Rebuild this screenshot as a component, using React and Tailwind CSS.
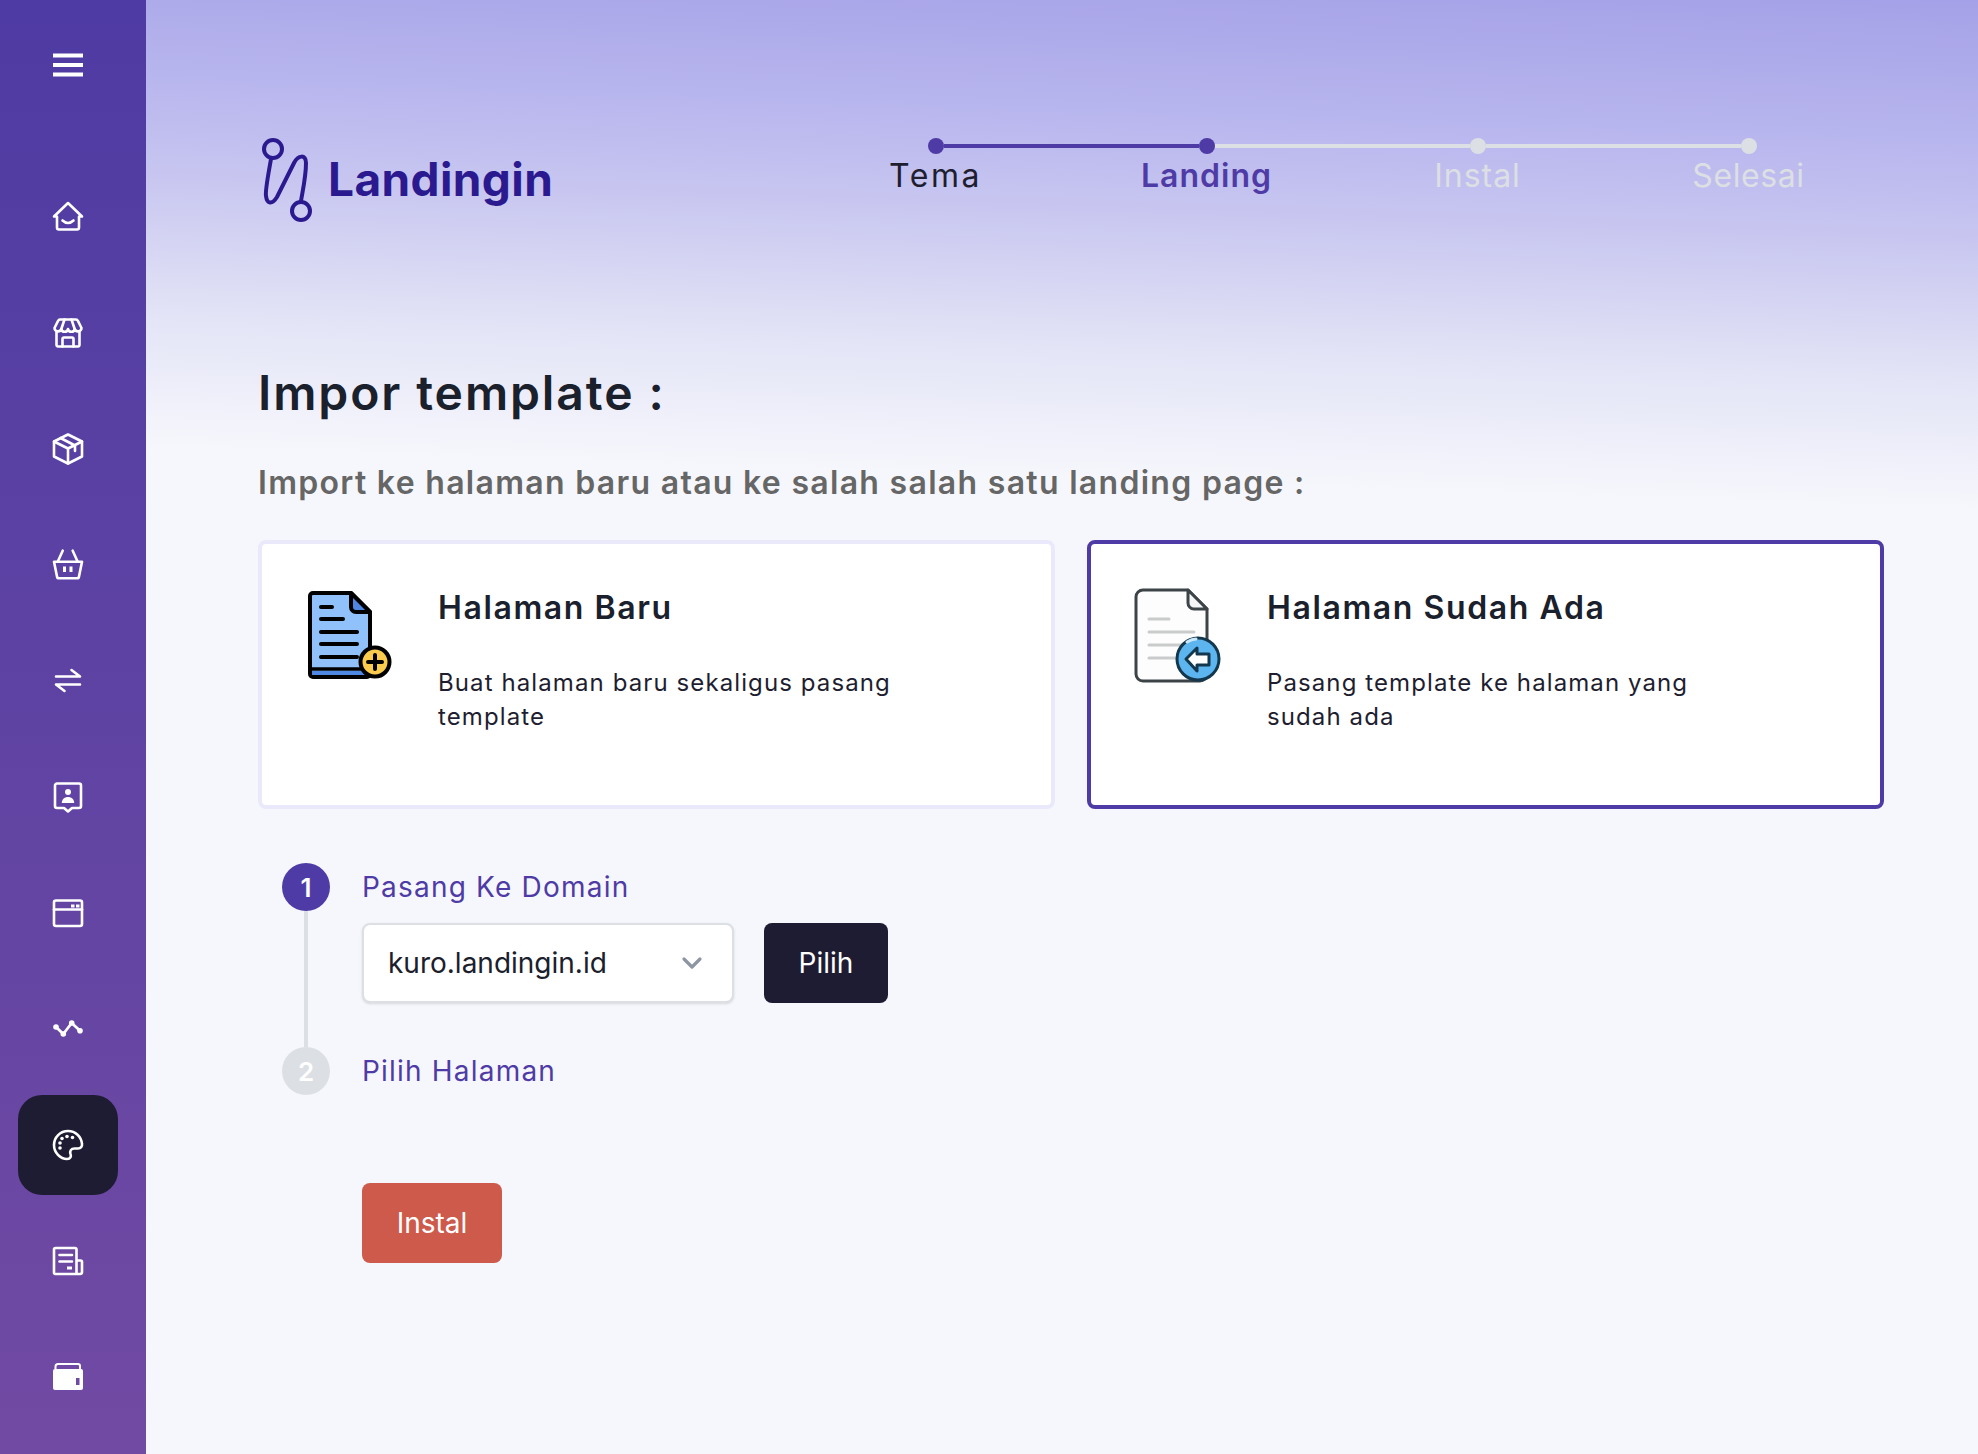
import React from 'react';
import { ChevronDown } from 'lucide-react';

const INTER = { fontFamily: 'Inter, sans-serif' };

// Sidebar icons are drawn on a 32 grid to follow the reference strokes
function Icon({ children }) {
  return (
    <svg viewBox="0 0 32 32" fill="none" stroke="white" strokeWidth="2.6" strokeLinecap="round" strokeLinejoin="round" className="w-8 h-8">
      {children}
    </svg>
  );
}

const ICONS = [
  <Icon key="home">
    <path d="M2 15.5 16 2l14 13.5h-3v11a2 2 0 0 1-2 2H7a2 2 0 0 1-2-2v-11z" />
    <path d="M10.5 19.5q5.5 5 11 0" />
  </Icon>,
  <Icon key="store">
    <path d="M8 2.5h16a2 2 0 0 1 1.8 1.2L29.5 11a3.5 3.5 0 0 1-6.8 1 3.4 3.4 0 0 1-6.7 0 3.4 3.4 0 0 1-6.7 0 3.5 3.5 0 0 1-6.8-1l3.7-7.3A2 2 0 0 1 8 2.5z" />
    <path d="M12.5 2.5 9.3 12M19.5 2.5l3.2 9.5" />
    <path d="M4.5 15v13a1.5 1.5 0 0 0 1.5 1.5h20a1.5 1.5 0 0 0 1.5-1.5V15" />
    <path d="M10.5 29.5V22a1.5 1.5 0 0 1 1.5-1.5h8a1.5 1.5 0 0 1 1.5 1.5v7.5" />
  </Icon>,
  <Icon key="box">
    <path d="M16 1.5 30 8.5v15L16 30.5 2 23.5v-15z" />
    <path d="M2 8.5 16 15.5l14-7M16 15.5v15M8.5 5l14.500 7.500V18" />
  </Icon>,
  <Icon key="basket">
    <path d="m10.700 1.700-5 11M20.700 1.700l5 11" />
    <path d="M2 12.700h28l-3 14.800a2 2 0 0 1-2 1.800H7a2 2 0 0 1-2-1.800z" />
    <path d="M12.500 17.500v5.500M19 17.500v5.500" strokeWidth="3" strokeLinecap="butt" />
  </Icon>,
  <Icon key="swap">
    <path d="M4 11.500h24l-8.500-6.500M28 19.500H4l8.500 6.500" />
  </Icon>,
  <Icon key="contact">
    <path d="M5 2.500h22a2 2 0 0 1 2 2V25a2 2 0 0 1-2 2h-7l-4 3.500-4-3.500H5a2 2 0 0 1-2-2V4.500a2 2 0 0 1 2-2z" />
    <circle cx="16" cy="11" r="3" fill="white" stroke="none" />
    <path d="M9.800 22c0-8 12.400-8 12.400 0z" fill="white" stroke="none" />
  </Icon>,
  <Icon key="browser">
    <rect x="2" y="3.500" width="28" height="25.500" rx="2" />
    <path d="M2 12.500h28" />
    <path d="M19 9h3.500M24 9h3.500" strokeWidth="3" strokeLinecap="butt" />
  </Icon>,
  <Icon key="wave">
    <path d="m4 14 7.300 7 8.400-11 8.300 7.700" strokeWidth="2.800" />
    <circle cx="4" cy="14" r="2.800" fill="white" stroke="none" />
    <circle cx="11.300" cy="21" r="2.800" fill="white" stroke="none" />
    <circle cx="19.700" cy="10" r="2.800" fill="white" stroke="none" />
    <circle cx="28" cy="17.700" r="2.800" fill="white" stroke="none" />
  </Icon>,
  <Icon key="palette">
    <path d="M16 2C8.300 2 2 8.300 2 16s6.300 14 13 14c3.500 0 4.500-2.500 3.500-5-1-3 .5-5.500 4-5.500H26c2.800 0 4.300-2 4-4.500C29.300 7.500 23.500 2 16 2z" />
    <circle cx="8" cy="14" r="1.800" fill="white" stroke="none" />
    <circle cx="10" cy="9.500" r="1.800" fill="white" stroke="none" />
    <circle cx="15" cy="7.500" r="1.800" fill="white" stroke="none" />
    <circle cx="20.500" cy="8.500" r="1.800" fill="white" stroke="none" />
    <circle cx="8" cy="19" r="1.800" fill="white" stroke="none" />
  </Icon>,
  <Icon key="news">
    <path d="M24.500 29H3.500A1.500 1.500 0 0 1 2 27.500V4.500A1.500 1.500 0 0 1 3.500 3H23a1.500 1.500 0 0 1 1.500 1.500V29h3.500a2 2 0 0 0 2-2V17a1.500 1.500 0 0 0-1.500-1.500h-4" />
    <path d="M7.500 10h12.500M7.500 16.500h12.500" />
    <path d="M15 23h5" strokeWidth="3" strokeLinecap="butt" />
  </Icon>,
  <Icon key="wallet">
    <path d="M3.500 8V5.500A2.500 2.500 0 0 1 6 3h20a2 2 0 0 1 2 2v2.500" strokeWidth="2" />
    <path fillRule="evenodd" fill="white" stroke="none" d="M3 8h26a2 2 0 0 1 2 2v17a2 2 0 0 1-2 2H3a2 2 0 0 1-2-2V10a2 2 0 0 1 2-2zm21 9v7h3.500v-7z" />
  </Icon>,
];

function NewPageArt() {
  return (
    <svg viewBox="0 0 130 120" className="w-[130px] h-[120px]">
      <path d="M24 21h38l19 19v62a3 3 0 0 1-3 3H24a3 3 0 0 1-3-3V24a3 3 0 0 1 3-3z" fill="#90c1fb" stroke="black" strokeWidth="4" strokeLinejoin="round" />
      <path d="M23 99h56v4H23z" fill="#4f88e3" />
      <path d="M21 97h58" stroke="black" strokeWidth="3.500" />
      <path d="M62 21v14a5 5 0 0 0 5 5h14z" fill="#4f88e3" stroke="black" strokeWidth="4" strokeLinejoin="round" />
      <path d="M32 35h11M32 47h22M32 60h36M32 72h36M32 85h36" stroke="black" strokeWidth="4" strokeLinecap="round" />
      <circle cx="86" cy="90" r="14.500" fill="#fbcb4d" stroke="black" strokeWidth="4" />
      <path d="M86 83v14M79 90h14" stroke="black" strokeWidth="4" strokeLinecap="round" />
    </svg>
  );
}

function ExistingPageArt() {
  return (
    <svg viewBox="0 0 130 120" className="w-[130px] h-[120px]">
      <path d="M25 18h45l19 19v65a7 7 0 0 1-7 7H25a7 7 0 0 1-7-7V25a7 7 0 0 1 7-7z" fill="#fdfdfd" stroke="#3d4448" strokeWidth="3" strokeLinejoin="round" />
      <path d="M70 18v13a6 6 0 0 0 6 6h13z" fill="#f4f5f6" stroke="#3d4448" strokeWidth="3" strokeLinejoin="round" />
      <path d="M31 47h20M31 60h45M31 73h35M31 86h30" stroke="#c9cbcc" strokeWidth="3" strokeLinecap="round" />
      <circle cx="80" cy="87" r="21" fill="#5cb5ee" stroke="#13374d" strokeWidth="3" />
      <path d="M69 70q5-3 9-3" stroke="#c9e8fb" strokeWidth="3" strokeLinecap="round" fill="none" />
      <path d="M68 87l11-11v6h12v11H79v6z" fill="white" stroke="#13374d" strokeWidth="3" strokeLinejoin="round" />
    </svg>
  );
}

function Stepper() {
  const steps = [
    { label: 'Tema', dot: 'bg-[#4f3ba5]', left: 'bg-transparent', right: 'bg-[#4f3ba5]', text: 'text-[#1e1e30] tracking-[2.6px]' },
    { label: 'Landing', dot: 'bg-[#4f3ba5]', left: 'bg-[#4f3ba5]', right: 'bg-[#dcdfe4]', text: 'text-[#4f3ba5] font-semibold tracking-[1px]' },
    { label: 'Instal', dot: 'bg-[#dcdfe4]', left: 'bg-[#dcdfe4]', right: 'bg-[#dcdfe4]', text: 'text-[#dcdfe4] tracking-[1px]' },
    { label: 'Selesai', dot: 'bg-[#dcdfe4]', left: 'bg-[#dcdfe4]', right: 'bg-transparent', text: 'text-[#dcdfe4] tracking-[0.6px]' },
  ];
  return (
    <div className="grid grid-cols-4 w-[1084px] mt-[3px]">
      {steps.map((s) => (
        <div key={s.label} className="flex flex-col items-center">
          <div className="flex items-center w-full">
            <div className={`flex-1 h-1 ${s.left}`}></div>
            <div className={`w-4 h-4 rounded-full ${s.dot}`}></div>
            <div className={`flex-1 h-1 ${s.right}`}></div>
          </div>
          <span className={`text-[32px] leading-[42px] mt-[1px] ${s.text}`}>{s.label}</span>
        </div>
      ))}
    </div>
  );
}

function OptionCard({ art, title, desc, active }) {
  return (
    <div className={`flex-1 h-[269px] rounded-lg bg-white border-4 flex pl-[27px] pt-[26px] ${active ? 'border-[#4f3ba5]' : 'border-[#e9e9fb]'}`}>
      <div className="w-[149px] shrink-0 mt-[2px]">{art}</div>
      <div className="w-[470px] pt-[16px]">
        <h3 className="text-[32px] leading-[44px] font-semibold tracking-[1.6px] text-[#1a202c]">{title}</h3>
        <p className="text-[24px] leading-[34px] tracking-[1.1px] mt-[36px] text-[#1e1e30]">{desc}</p>
      </div>
    </div>
  );
}

export default function App() {
  return (
    <div className="flex w-full h-[1454px] overflow-hidden" style={INTER}>
      <aside className="w-[146px] shrink-0 flex flex-col items-start pl-[18px] pt-[49px] bg-gradient-to-b from-[#4e3ba3] to-[#714aa3]">
        <svg viewBox="0 0 32 32" stroke="white" strokeWidth="4" className="w-8 h-8 mb-[86px] ml-[34px]">
          <path d="M1 6.500h30M1 16h30M1 25.500h30" />
        </svg>
        {ICONS.map((icon, i) => (
          <div key={i} className={`w-[100px] h-[100px] mb-[16px] shrink-0 rounded-3xl flex items-center justify-center ${i === 8 ? 'bg-[#1e1c33]' : ''}`}>
            {icon}
          </div>
        ))}
      </aside>

      <main className="flex-1 pl-[112px] pr-[94px] pt-[135px] bg-[linear-gradient(182deg,#a5a1e8_0px,#b9b7ee_150px,#c8c6f0_240px,#e3e4f6_380px,#f6f7fc_510px)]">
        <header className="flex justify-between items-start h-[96px]">
          <div className="flex items-center">
            <svg viewBox="15 15 60 90" fill="none" stroke="#2b1a8f" strokeWidth="4" strokeLinecap="round" className="w-[60px] h-[90px] -ml-[3px] mt-[1px]">
              <circle cx="33" cy="28" r="9" />
              <circle cx="61" cy="90" r="9" />
              <path d="M31 38C28 55 25 70 26 75c1 8 6 9 11 1l17-34c4-8 12-9 12 0 0 13-3 26-5 38" />
            </svg>
            <span className="text-[46px] leading-none font-bold tracking-[0.4px] text-[#2b1a8f] ml-[13px] -mt-[4px]">Landingin</span>
          </div>
          <Stepper />
        </header>

        <h1 className="text-[48px] leading-[60px] font-semibold tracking-[1.9px] text-[#1a202c] mt-[132px]">Impor template :</h1>
        <p className="text-[32px] leading-[44px] font-semibold tracking-[1.3px] text-[#666666] mt-[38px]">Import ke halaman baru atau ke salah salah satu landing page :</p>

        <div className="flex gap-[32px] mt-[35px]">
          <OptionCard art={<NewPageArt />} title="Halaman Baru" desc="Buat halaman baru sekaligus pasang template" />
          <OptionCard art={<ExistingPageArt />} title="Halaman Sudah Ada" desc="Pasang template ke halaman yang sudah ada" active />
        </div>

        <div className="flex mt-[54px] ml-[24px]">
          <div className="flex flex-col items-center w-12">
            <div className="w-12 h-12 rounded-full bg-[#4f3ba5] text-white text-[26px] font-semibold flex items-center justify-center">1</div>
            <div className="w-1 h-[136px] bg-[#dcdfe4]"></div>
            <div className="w-12 h-12 rounded-full bg-[#dcdfe4] text-white text-[26px] font-semibold flex items-center justify-center">2</div>
          </div>
          <div className="ml-8">
            <div className="h-12 flex items-center text-[28px] tracking-[1.2px] text-[#4f3ba5]">Pasang Ke Domain</div>
            <div className="flex items-center gap-[30px] mt-3">
              <div className="w-[372px] h-[80px] bg-white rounded-lg border-2 border-[#dcdfe4] shadow-sm flex items-center justify-between pl-[24px] pr-[24px] text-[28px] text-[#1a202c]">
                kuro.landingin.id
                <ChevronDown className="w-8 h-8 text-[#8f96a3]" strokeWidth={2.4} />
              </div>
              <button className="w-[124px] h-[80px] rounded-lg bg-[#1e1c33] text-white text-[28px]">Pilih</button>
            </div>
            <div className="h-12 flex items-center text-[28px] tracking-[1.2px] text-[#4f3ba5] mt-[44px]">Pilih Halaman</div>
            <button className="block w-[140px] h-[80px] rounded-lg bg-[#cd5a4b] text-white text-[28px] mt-[88px]">Instal</button>
          </div>
        </div>
      </main>
    </div>
  );
}
